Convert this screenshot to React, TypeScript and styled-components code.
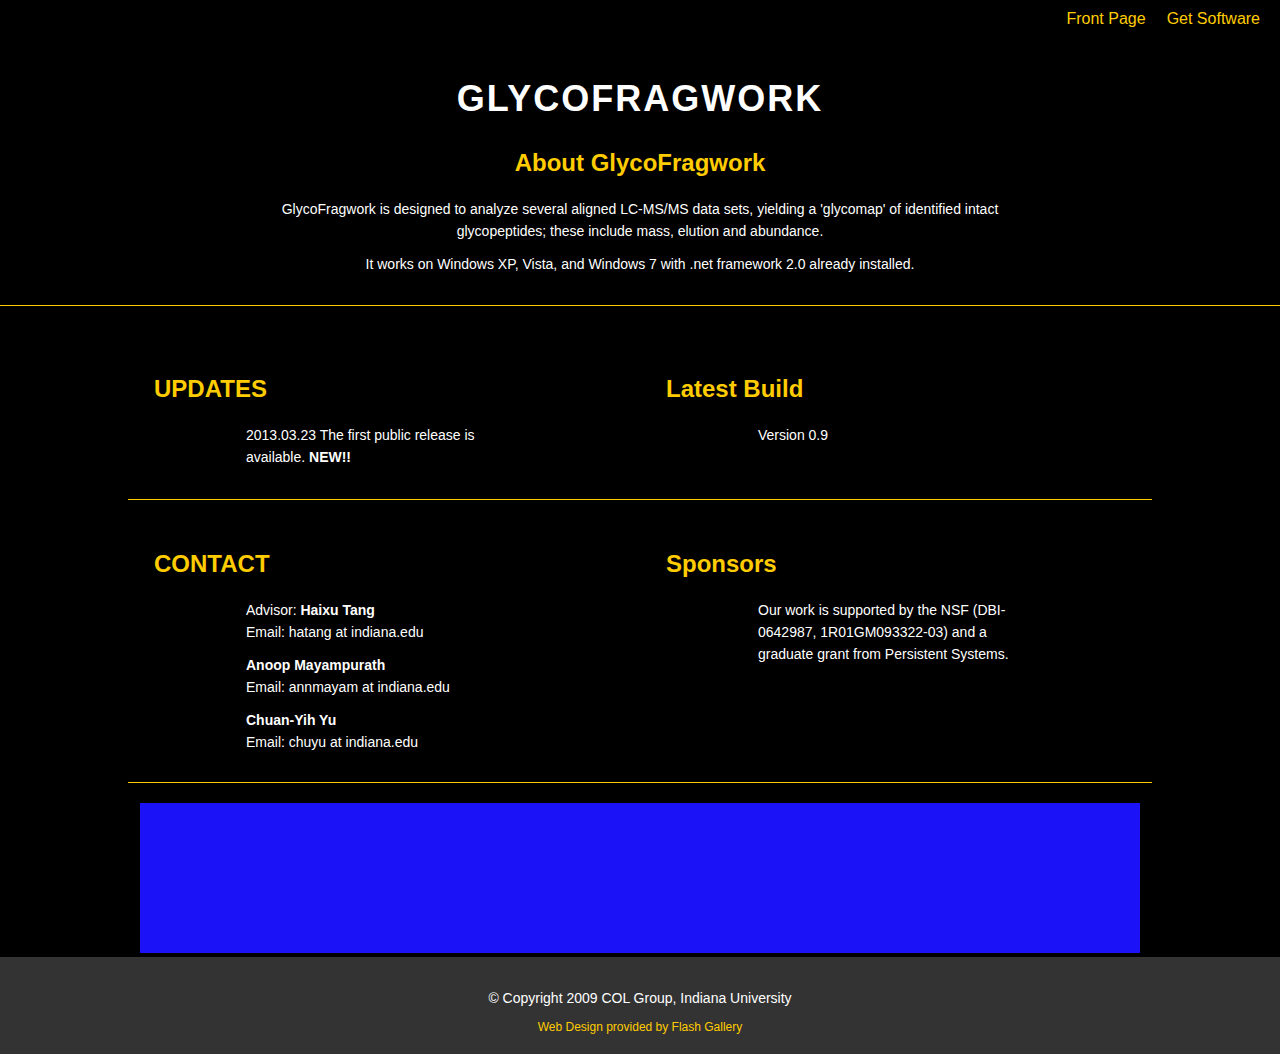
import React from "react";
import styled, { createGlobalStyle } from "styled-components";

const YELLOW = "#ffcc00";

const GlobalStyle = createGlobalStyle`
  html, body {
    margin: 0;
    padding: 0;
    background: #000;
  }
  body {
    font-family: "Liberation Sans", Arial, Helvetica, sans-serif;
    color: #fff;
  }
  * { box-sizing: border-box; }
`;

const Page = styled.div`
  background: #000;
  min-height: 1054px;
  display: flex;
  flex-direction: column;
`;

const Header = styled.header`
  border-bottom: 1px solid ${YELLOW};
  padding-bottom: 30px;
`;

const Nav = styled.nav`
  display: flex;
  justify-content: flex-end;
  gap: 21px;
  padding: 9px 20px 0;
  height: 29px;
`;

const NavLink = styled.a`
  color: ${YELLOW};
  font-size: 16px;
  line-height: 20px;
  text-decoration: none;
`;

const Title = styled.h1`
  margin: 48px 0 0;
  text-align: center;
  font-size: 36px;
  line-height: 44px;
  font-weight: bold;
  letter-spacing: 2px;
  color: #fff;
`;

const AboutHeading = styled.h2`
  margin: 28px 0 0;
  text-align: center;
  font-size: 24px;
  line-height: 28px;
  font-weight: bold;
  color: ${YELLOW};
`;

const Intro = styled.div`
  width: 760px;
  margin: 21px auto 0;
  text-align: center;
`;

const Text = styled.p`
  margin: 0 0 11px;
  font-size: 14px;
  line-height: 22px;
  color: #fff;
  &:last-child {
    margin-bottom: 0;
  }
`;

const Main = styled.main`
  width: 1024px;
  margin: 0 auto;
  padding-top: 19px;
`;

const Row = styled.section<{ $bottom: number }>`
  display: grid;
  grid-template-columns: 1fr 1fr;
  padding: 50px 0 ${(p) => p.$bottom}px;
  border-bottom: 1px solid ${YELLOW};
`;

const Column = styled.div`
  padding: 0 26px;
`;

const SectionHeading = styled.h2`
  margin: 0 0 21px;
  font-size: 24px;
  line-height: 28px;
  font-weight: bold;
  color: ${YELLOW};
`;

const Body = styled.div`
  width: 260px;
  margin-left: 92px;
  & > p:last-child {
    margin-bottom: 11px;
  }
`;

const Banner = styled.div`
  height: 150px;
  margin: 20px 12px 4px;
  background: #1b12f7;
`;

const Footer = styled.footer`
  background: #333333;
  padding: 30px 0 18px;
  text-align: center;
`;

const Copyright = styled.p`
  margin: 0;
  font-size: 14px;
  line-height: 22px;
  color: #fff;
`;

const Credit = styled.p`
  margin: 9px 0 0;
  font-size: 12px;
  line-height: 18px;
  color: ${YELLOW};
`;

export default function App() {
  return (
    <>
      <GlobalStyle />
      <Page>
        <Header>
          <Nav>
            <NavLink href="#">Front Page</NavLink>
            <NavLink href="#">Get Software</NavLink>
          </Nav>
          <Title>GLYCOFRAGWORK</Title>
          <AboutHeading>About GlycoFragwork</AboutHeading>
          <Intro>
            <Text>
              GlycoFragwork is designed to analyze several aligned LC-MS/MS data sets, yielding a
              'glycomap' of identified intact glycopeptides; these include mass, elution and
              abundance.
            </Text>
            <Text>
              It works on Windows XP, Vista, and Windows 7 with .net framework 2.0 already installed.
            </Text>
          </Intro>
        </Header>

        <Main>
          <Row $bottom={20}>
            <Column>
              <SectionHeading>UPDATES</SectionHeading>
              <Body>
                <Text>
                  2013.03.23 The first public release is available. <b>NEW!!</b>
                </Text>
              </Body>
            </Column>
            <Column>
              <SectionHeading>Latest Build</SectionHeading>
              <Body>
                <Text>Version 0.9</Text>
              </Body>
            </Column>
          </Row>
          <Row $bottom={18}>
            <Column>
              <SectionHeading>CONTACT</SectionHeading>
              <Body>
                <Text>
                  Advisor: <b>Haixu Tang</b>
                  <br />
                  Email: hatang at indiana.edu
                </Text>
                <Text>
                  <b>Anoop Mayampurath</b>
                  <br />
                  Email: annmayam at indiana.edu
                </Text>
                <Text>
                  <b>Chuan-Yih Yu</b>
                  <br />
                  Email: chuyu at indiana.edu
                </Text>
              </Body>
            </Column>
            <Column>
              <SectionHeading>Sponsors</SectionHeading>
              <Body>
                <Text>
                  Our work is supported by the NSF (DBI-0642987, 1R01GM093322-03) and a graduate
                  grant from Persistent Systems.
                </Text>
              </Body>
            </Column>
          </Row>
          <Banner />
        </Main>

        <Footer>
          <Copyright>© Copyright 2009 COL Group, Indiana University</Copyright>
          <Credit>Web Design provided by Flash Gallery</Credit>
        </Footer>
      </Page>
    </>
  );
}
